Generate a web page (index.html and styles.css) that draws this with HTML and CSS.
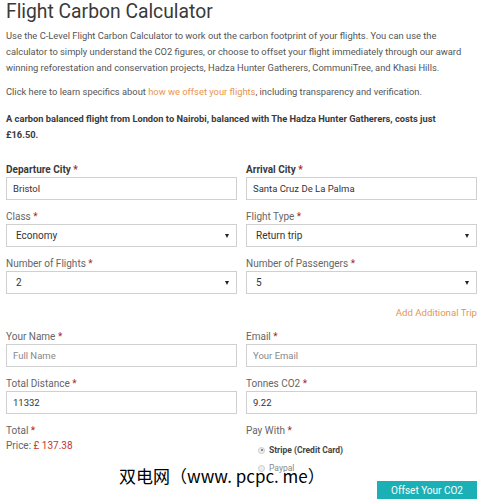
FILE: index.html
```html
<!DOCTYPE html>
<html>
<head>
<meta charset="utf-8">
<link rel="stylesheet" href="styles.css">
</head>
<body>
<div class="page">
  <h1 class="title">Flight Carbon Calculator</h1>
  <p class="intro">Use the C-Level Flight Carbon Calculator to work out the carbon footprint of your flights. You can use the calculator to simply understand the CO2 figures, or choose to offset your flight immediately through our award winning reforestation and conservation projects, Hadza Hunter Gatherers, CommuniTree, and Khasi Hills.</p>
  <p class="intro second">Click here to learn specifics about <a class="link" href="#">how we offset your flights</a>, including transparency and verification.</p>
  <p class="promo">A carbon balanced flight from London to Nairobi, balanced with The Hadza Hunter Gatherers, costs just £16.50.</p>

  <div class="grid">
    <div class="field">
      <div class="label strong">Departure City <span class="req">*</span></div>
      <div class="input">Bristol</div>
    </div>
    <div class="field">
      <div class="label strong">Arrival City <span class="req">*</span></div>
      <div class="input">Santa Cruz De La Palma</div>
    </div>
    <div class="field">
      <div class="label">Class <span class="req">*</span></div>
      <div class="input select">Economy<span class="arrow"></span></div>
    </div>
    <div class="field">
      <div class="label">Flight Type <span class="req">*</span></div>
      <div class="input select">Return trip<span class="arrow"></span></div>
    </div>
    <div class="field">
      <div class="label">Number of Flights <span class="req">*</span></div>
      <div class="input select">2<span class="arrow"></span></div>
    </div>
    <div class="field">
      <div class="label">Number of Passengers <span class="req">*</span></div>
      <div class="input select">5<span class="arrow"></span></div>
    </div>
  </div>

  <div class="addrow"><a class="link add" href="#">Add Additional Trip</a></div>

  <div class="grid">
    <div class="field">
      <div class="label">Your Name <span class="req">*</span></div>
      <div class="input placeholder">Full Name</div>
    </div>
    <div class="field">
      <div class="label">Email <span class="req">*</span></div>
      <div class="input placeholder">Your Email</div>
    </div>
    <div class="field">
      <div class="label">Total Distance <span class="req">*</span></div>
      <div class="input">11332</div>
    </div>
    <div class="field">
      <div class="label">Tonnes CO2 <span class="req">*</span></div>
      <div class="input">9.22</div>
    </div>
    <div class="field">
      <div class="label">Total <span class="req">*</span></div>
      <div class="price">Price: <span class="amount">£ 137.38</span></div>
    </div>
    <div class="field">
      <div class="label">Pay With <span class="req">*</span></div>
      <div class="radios">
        <div class="radio checked"><span class="dot"></span><span class="rlabel bold">Stripe (Credit Card)</span></div>
        <div class="radio"><span class="dot"></span><span class="rlabel">Paypal</span></div>
      </div>
    </div>
  </div>

  <div class="actions"><button class="btn">Offset Your CO2</button></div>

  <div class="watermark">双电网（www. pcpc. me）</div>
</div>
</body>
</html>
```

FILE: styles.css
```css
* { box-sizing: border-box; }
html, body { margin: 0; padding: 0; background: #fff; }
body {
  font-family: Roboto, "Liberation Sans", Arial, sans-serif;
  color: #555;
  width: 484px;
  height: 500px;
  overflow: hidden;
}
.page {
  position: relative;
  padding: 0 7px 0 6px;
}
.title {
  margin: 0;
  font-size: 19.3px;
  font-weight: 400;
  line-height: 24px;
  color: #3a3a3a;
}
.intro {
  margin: 4px 0 0;
  font-size: 9.35px;
  line-height: 16px;
  color: #555;
}
.intro.second { margin-top: 8px; }
.link { color: #e8954f; text-decoration: none; }
.promo {
  margin: 11px 0 0;
  max-width: 455px;
  font-size: 9.3px;
  line-height: 16px;
  font-weight: 700;
  color: #3a3a3a;
}
.grid {
  display: grid;
  grid-template-columns: 231px 231px;
  column-gap: 9px;
  row-gap: 10px;
}
.promo + .grid { margin-top: 20px; }
.label {
  font-size: 10px;
  line-height: 14px;
  color: #666;
}
.label.strong { font-weight: 700; color: #3a3a3a; }
.req { color: #a52a2a; }
.input {
  position: relative;
  height: 23px;
  border: 1px solid #d0d0d0;
  padding: 0 6px;
  font-size: 9.5px;
  line-height: 21px;
  color: #333;
}
.input.select { padding-left: 9px; font-size: 10px; }
.input.placeholder { color: #888; }
.arrow {
  position: absolute;
  right: 7px;
  top: 9px;
  width: 0;
  height: 0;
  border-left: 2.5px solid transparent;
  border-right: 2.5px solid transparent;
  border-top: 4px solid #222;
}
.addrow {
  margin-top: 12px;
  margin-bottom: 10px;
  text-align: right;
  font-size: 9.6px;
  line-height: 14px;
}
.price {
  margin-top: 1px;
  font-size: 10px;
  line-height: 14px;
  color: #666;
}
.amount { color: #c0392b; }
.radios {
  padding-left: 12px;
  padding-top: 3px;
}
.radio {
  display: flex;
  align-items: center;
  height: 18px;
  font-size: 8.5px;
  color: #888;
}
.radio .dot {
  width: 7px;
  height: 7px;
  border-radius: 50%;
  border: 1px solid #ccc;
  background: #eee;
  margin-right: 4px;
  position: relative;
}
.radio.checked .dot::after {
  content: "";
  position: absolute;
  left: 1.5px;
  top: 1.5px;
  width: 2px;
  height: 2px;
  border-radius: 50%;
  background: #666;
}
.rlabel.bold { font-weight: 700; color: #444; }
.actions {
  display: flex;
  justify-content: flex-end;
  margin-top: 4px;
}
.btn {
  width: 100px;
  height: 18px;
  border: none;
  background: #1bb0b5;
  color: #fff;
  font-family: Roboto, "Liberation Sans", Arial, sans-serif;
  font-size: 10px;
  padding: 0;
}
.watermark {
  position: absolute;
  left: 119px;
  top: 465px;
  font-family: "Noto Sans CJK SC", sans-serif;
  font-size: 17px;
  line-height: 22px;
  color: #000;
  text-shadow: -1px -1px 0 #fff, 1px -1px 0 #fff, -1px 1px 0 #fff, 1px 1px 0 #fff;
  white-space: nowrap;
}
```
